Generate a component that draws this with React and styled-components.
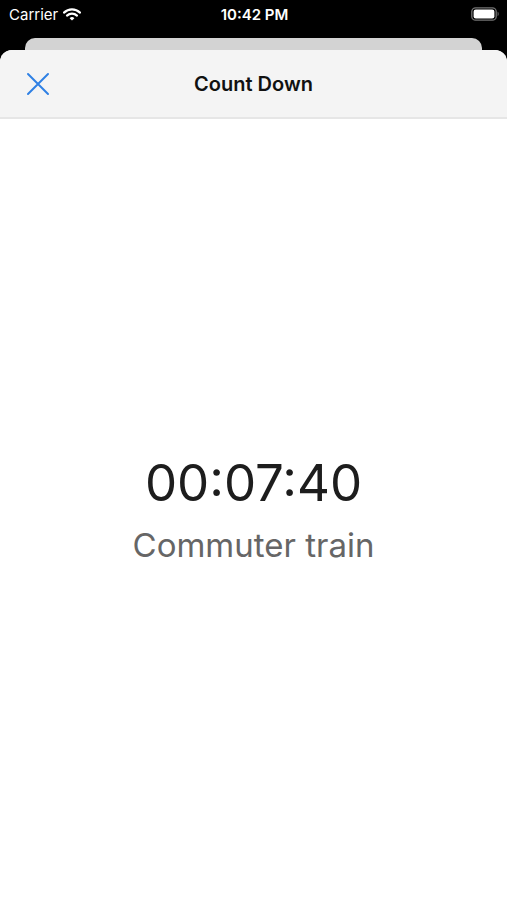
import React from 'react';
import styled, { createGlobalStyle } from 'styled-components';

const GlobalStyle = createGlobalStyle`
  html, body {
    margin: 0;
    padding: 0;
    background: #000;
  }
  body {
    font-family: Inter, "Liberation Sans", sans-serif;
  }
`;

const Screen = styled.div`
  width: 507px;
  height: 900px;
  background: #000;
  display: flex;
  flex-direction: column;
  overflow: hidden;
`;

const StatusBar = styled.div`
  height: 28px;
  display: grid;
  grid-template-columns: 1fr auto 1fr;
  align-items: center;
  padding: 0 7px 0 9px;
  color: #fff;
  font-size: 15px;
`;

const Carrier = styled.div`
  display: flex;
  align-items: center;
  gap: 5px;
`;

const Clock = styled.div`
  font-weight: 600;
`;

const Battery = styled.div`
  justify-self: end;
  display: flex;
  align-items: center;
`;

const BackCard = styled.div`
  height: 12px;
  margin: 10px 25px 0;
  background: #d3d3d3;
  border-radius: 10px 10px 0 0;
`;

const Sheet = styled.div`
  flex: 1;
  background: #fff;
  border-radius: 12px 12px 0 0;
  overflow: hidden;
  display: flex;
  flex-direction: column;
`;

const NavBar = styled.div`
  height: 67px;
  background: #f4f4f4;
  border-bottom: 2px solid #e6e6e6;
  display: grid;
  grid-template-columns: 80px 1fr 80px;
  align-items: center;
`;

const CloseButton = styled.button`
  border: none;
  background: none;
  padding: 0 0 0 26px;
  display: flex;
  align-items: center;
  cursor: pointer;
`;

const Title = styled.h1`
  margin: 0;
  text-align: center;
  font-size: 20px;
  font-weight: 600;
  color: #111;
`;

const Body = styled.div`
  flex: 1;
  display: flex;
  flex-direction: column;
  align-items: center;
  padding-top: 333px;
`;

const Timer = styled.div`
  font-size: 51px;
  font-weight: 400;
  color: #1d1d1d;
  line-height: 62px;
`;

const Label = styled.div`
  font-size: 33px;
  color: #666;
  line-height: 42px;
  margin-top: 10px;
`;

const WifiIcon = () => (
  <svg width="18" height="13" viewBox="0 0 18 13">
    <path d="M1 4.6 A11.5 11.5 0 0 1 17 4.6" stroke="#fff" strokeWidth="2.2" fill="none" strokeLinecap="round" />
    <path d="M4 7.6 A7.2 7.2 0 0 1 14 7.6" stroke="#fff" strokeWidth="2.2" fill="none" strokeLinecap="round" />
    <path d="M9 12.5 L6.6 10.2 A3.4 3.4 0 0 1 11.4 10.2 Z" fill="#fff" />
  </svg>
);

const BatteryIcon = () => (
  <svg width="29" height="14" viewBox="0 0 29 14">
    <rect x="0.8" y="0.8" width="24.4" height="12.4" rx="3.8" stroke="#fff" strokeOpacity="0.45" strokeWidth="1.3" fill="none" />
    <rect x="2.6" y="2.6" width="20.8" height="8.8" rx="2.2" fill="#fff" />
    <path d="M26.6 4.8 C28 5.2 28 8.8 26.6 9.2 Z" fill="#fff" fillOpacity="0.45" />
  </svg>
);

const CloseIcon = () => (
  <svg width="24" height="24" viewBox="0 0 24 24">
    <path d="M2 2 L22 22 M22 2 L2 22" stroke="#2f80e4" strokeWidth="2" strokeLinecap="round" />
  </svg>
);

export default function App() {
  return (
    <>
      <GlobalStyle />
      <Screen>
        <StatusBar>
          <Carrier>
            Carrier
            <WifiIcon />
          </Carrier>
          <Clock>10:42 PM</Clock>
          <Battery>
            <BatteryIcon />
          </Battery>
        </StatusBar>
        <BackCard />
        <Sheet>
          <NavBar>
            <CloseButton aria-label="Close">
              <CloseIcon />
            </CloseButton>
            <Title>Count Down</Title>
            <div />
          </NavBar>
          <Body>
            <Timer>00:07:40</Timer>
            <Label>Commuter train</Label>
          </Body>
        </Sheet>
      </Screen>
    </>
  );
}
